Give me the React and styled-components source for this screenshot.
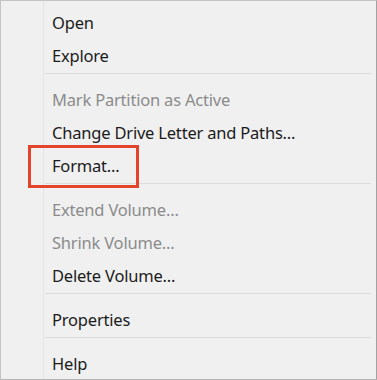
import React from "react"
import styled, { createGlobalStyle } from "styled-components"

const GlobalStyle = createGlobalStyle`
  html, body {
    margin: 0;
    padding: 0;
    background: #f0f0f0;
  }
  body {
    font-family: "Noto Sans", "Open Sans", sans-serif;
  }
`

const items = [
  { label: "Open" },
  { label: "Explore" },
  { separator: true },
  { label: "Mark Partition as Active", disabled: true },
  { label: "Change Drive Letter and Paths..." },
  { label: "Format...", marked: true },
  { separator: true },
  { label: "Extend Volume...", disabled: true },
  { label: "Shrink Volume...", disabled: true },
  { label: "Delete Volume..." },
  { separator: true },
  { label: "Properties" },
  { separator: true },
  { label: "Help" },
]

class App extends React.Component {
  render() {
    return (
      <>
        <GlobalStyle />
        <Menu>
          <Gutter />
          <List>
            {items.map((item, i) =>
              item.separator ? (
                <Separator key={i} />
              ) : (
                <Item key={i} $disabled={item.disabled} $marked={item.marked}>
                  {item.label}
                </Item>
              )
            )}
          </List>
        </Menu>
      </>
    )
  }
}

export default App

const Menu = styled.div`
  display: flex;
  width: 377px;
  height: 380px;
  box-sizing: border-box;
  background: #f0f0f0;
  border: 1px solid #c4c4c4;
  border-right-color: #a2a2a2;
  border-bottom-color: #b4b4b4;
  overflow: hidden;
`

const Gutter = styled.div`
  width: 42px;
  flex: none;
  border-right: 1px solid #e4e4e4;
`

const List = styled.ul`
  list-style: none;
  margin: 0;
  padding: 5px 5px 0 0;
  flex: 1;
  display: flex;
  flex-direction: column;
`

const Item = styled.li`
  position: relative;
  height: 33px;
  flex: none;
  display: flex;
  align-items: center;
  padding-left: 8px;
  font-size: 16.5px;
  letter-spacing: -0.2px;
  color: ${(p) => (p.$disabled ? "#8b8b8b" : "#1b1b1b")};

  ${(p) =>
    p.$marked &&
    `
    &::after {
      content: "";
      position: absolute;
      left: -16px;
      top: -4px;
      width: 111px;
      height: 43px;
      box-sizing: border-box;
      border: 3px solid #e2442c;
    }
  `}
`

const Separator = styled.li`
  flex: none;
  height: 1px;
  margin: 1px 0 9px 1px;
  background: #dcdcdc;
`
